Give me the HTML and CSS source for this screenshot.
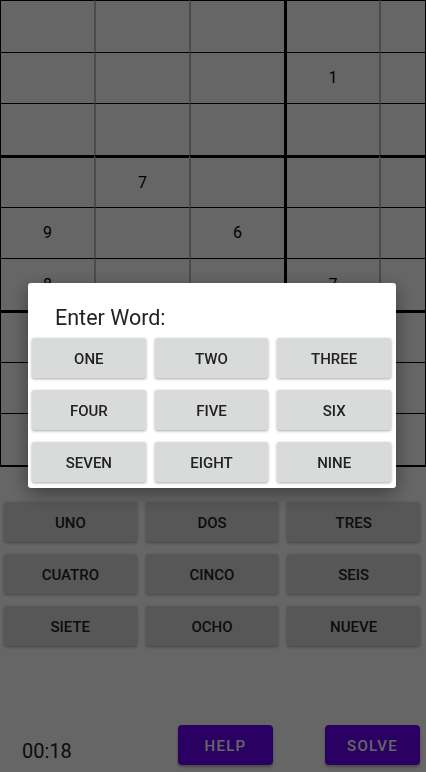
FILE: index.html
```html
<!DOCTYPE html>
<html>
<head>
<meta charset="utf-8">
<link rel="stylesheet" href="styles.css">
</head>
<body>
<div class="app">
  <div class="board">
    <div class="grid">
      <!-- row 0 -->
      <div class="cell"></div><div class="cell"></div><div class="cell"></div><div class="cell c3"></div><div class="cell"></div><div class="cell"></div><div class="cell c6"></div><div class="cell"></div><div class="cell"></div>
      <!-- row 1 -->
      <div class="cell"></div><div class="cell"></div><div class="cell"></div><div class="cell c3">1</div><div class="cell"></div><div class="cell"></div><div class="cell c6"></div><div class="cell"></div><div class="cell"></div>
      <!-- row 2 -->
      <div class="cell"></div><div class="cell"></div><div class="cell"></div><div class="cell c3"></div><div class="cell"></div><div class="cell"></div><div class="cell c6"></div><div class="cell"></div><div class="cell"></div>
      <!-- row 3 -->
      <div class="cell r3"></div><div class="cell r3">7</div><div class="cell r3"></div><div class="cell r3 c3"></div><div class="cell r3"></div><div class="cell r3"></div><div class="cell r3 c6"></div><div class="cell r3"></div><div class="cell r3"></div>
      <!-- row 4 -->
      <div class="cell">9</div><div class="cell"></div><div class="cell">6</div><div class="cell c3"></div><div class="cell"></div><div class="cell"></div><div class="cell c6"></div><div class="cell"></div><div class="cell"></div>
      <!-- row 5 -->
      <div class="cell">8</div><div class="cell"></div><div class="cell"></div><div class="cell c3">7</div><div class="cell"></div><div class="cell"></div><div class="cell c6"></div><div class="cell"></div><div class="cell"></div>
      <!-- row 6 -->
      <div class="cell r3"></div><div class="cell r3"></div><div class="cell r3"></div><div class="cell r3 c3"></div><div class="cell r3"></div><div class="cell r3"></div><div class="cell r3 c6"></div><div class="cell r3"></div><div class="cell r3"></div>
      <!-- row 7 -->
      <div class="cell"></div><div class="cell"></div><div class="cell"></div><div class="cell c3"></div><div class="cell"></div><div class="cell"></div><div class="cell c6"></div><div class="cell"></div><div class="cell"></div>
      <!-- row 8 -->
      <div class="cell"></div><div class="cell"></div><div class="cell"></div><div class="cell c3"></div><div class="cell"></div><div class="cell"></div><div class="cell c6"></div><div class="cell"></div><div class="cell"></div>
    </div>
  </div>

  <div class="words">
    <button class="word">UNO</button>
    <button class="word">DOS</button>
    <button class="word">TRES</button>
    <button class="word">CUATRO</button>
    <button class="word">CINCO</button>
    <button class="word">SEIS</button>
    <button class="word">SIETE</button>
    <button class="word">OCHO</button>
    <button class="word">NUEVE</button>
  </div>

  <div class="bottom">
    <div class="timer">00:18</div>
    <button class="action help">HELP</button>
    <button class="action solve">SOLVE</button>
  </div>
</div>

<div class="scrim"></div>

<div class="dialog">
  <div class="dialog-title">Enter Word:</div>
  <div class="dialog-grid">
    <button class="dbtn">ONE</button>
    <button class="dbtn">TWO</button>
    <button class="dbtn">THREE</button>
    <button class="dbtn">FOUR</button>
    <button class="dbtn">FIVE</button>
    <button class="dbtn">SIX</button>
    <button class="dbtn">SEVEN</button>
    <button class="dbtn">EIGHT</button>
    <button class="dbtn">NINE</button>
  </div>
</div>
</body>
</html>
```

FILE: styles.css
```css
* {
  box-sizing: border-box;
}

html, body {
  margin: 0;
  padding: 0;
  background: #ffffff;
  font-family: Roboto, "Noto Sans", "Liberation Sans", sans-serif;
}

.app {
  width: 426px;
  height: 772px;
  display: flex;
  flex-direction: column;
  overflow: hidden;
}

.board {
  width: 426px;
  height: 467px;
  overflow: hidden;
  border-left: 1px solid #000;
  border-right: 1px solid #000;
  border-bottom: 2px solid #000;
  flex: none;
}

.grid {
  display: grid;
  grid-template-columns: repeat(9, 95px);
  grid-template-rows: repeat(9, 1fr);
  height: 100%;
  margin-left: -2px;
}

.cell {
  border-top: 1px solid #000;
  border-left: 2px solid #bcbcbc;
  display: flex;
  align-items: center;
  justify-content: center;
  font-size: 16px;
  color: #000;
}

.cell.r3 {
  border-top: 3px solid #000;
}

.cell.c3,
.cell.c6 {
  border-left: 3px solid #000;
}

.words {
  margin-top: 35px;
  padding: 0 6px 0 4px;
  display: grid;
  grid-template-columns: repeat(3, 1fr);
  column-gap: 9px;
  row-gap: 12px;
}

.word,
.dbtn {
  height: 40px;
  border: none;
  border-radius: 2px;
  background: #d9dada;
  box-shadow: 0 1px 3px rgba(0, 0, 0, 0.35);
  font-family: Roboto, "Noto Sans", "Liberation Sans", sans-serif;
  font-size: 15px;
  font-weight: 500;
  color: #222;
  padding: 1px 0 0;
}

.bottom {
  margin-top: auto;
  height: 40px;
  margin-bottom: 7px;
  display: flex;
  align-items: center;
  padding-right: 6px;
}

.timer {
  flex: 1;
  padding-left: 22px;
  padding-top: 11px;
  font-size: 20px;
  color: #222;
}

.action {
  width: 95px;
  height: 40px;
  border: none;
  border-radius: 4px;
  background: #6a00f4;
  color: #fff;
  font-family: Roboto, "Noto Sans", "Liberation Sans", sans-serif;
  font-size: 15px;
  font-weight: 500;
  letter-spacing: 1.3px;
  padding: 1px 0 0;
  box-shadow: 0 2px 3px rgba(0, 0, 0, 0.3);
}

.help {
  margin-right: 52px;
}

.scrim {
  position: fixed;
  inset: 0;
  background: rgba(0, 0, 0, 0.6);
}

.dialog {
  position: fixed;
  left: 28px;
  top: 283px;
  width: 368px;
  height: 205px;
  background: #fff;
  border-radius: 3px;
  box-shadow: 0 6px 20px rgba(0, 0, 0, 0.4);
  padding: 0 5px 0 4px;
}

.dialog-title {
  padding-left: 23px;
  padding-top: 22px;
  height: 55px;
  font-size: 21.5px;
  color: #222;
}

.dialog-grid {
  display: grid;
  grid-template-columns: repeat(3, 1fr);
  column-gap: 9px;
  row-gap: 12px;
}
```
